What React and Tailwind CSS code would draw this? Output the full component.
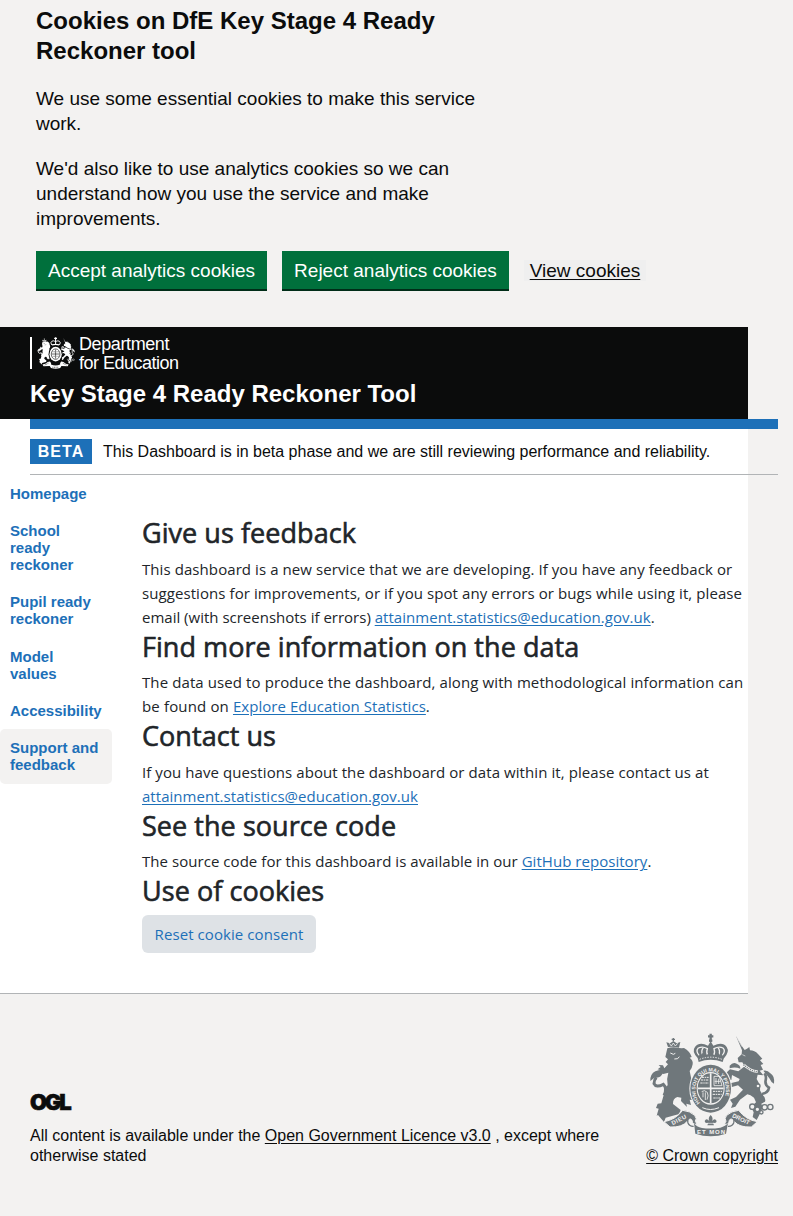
const Lion = () => (
  <g>
    <path d="M84 66 L79 52 L90 55 L100 48 L110 55 L121 51 L117 68 Q100 63 84 66Z" />
    <path d="M100 39v9M95 43h10" stroke="currentColor" strokeWidth="4" />
    <path d="M88 55l6 8 6-9 6 9 7-8" className="fill-none stroke-(--gap)" strokeWidth="2.5" />
    <path d="M82 70 Q99 64 117 69 Q126 70 132 69 Q150 79 155 96 L149 98 Q160 106 158 118 Q157 128 149 138 L156 172 Q152 181 158 192 L153 205 Q164 217 159 226 L149 224 L153 240 L139 236 L141 246 L123 228 L124 218 L112 216 Q98 221 99 237 Q112 247 122 255 Q120 263 115 268 L77 278 L72 291 L54 270 L50 272 L56 251 L48 249 L53 236 L64 235 L72 207 Q70 190 83 181 Q79 161 85 143 L70 147 L58 142 L63 136 L53 133 L62 126 L56 120 L69 121 L73 130 L84 118 L77 111 L84 103 L76 96 Z" />
    <path d="M91 84l9 4 6-3M103 102l10-1 5-6" className="fill-none stroke-(--gap)" strokeWidth="3" />
    <path d="M72 211 Q83 190 70 178 Q48 189 42 176 Q42 164 49 157" fill="none" stroke="currentColor" strokeWidth="9" />
    <path d="M31 168 Q30 147 46 139 Q61 131 79 136 Q69 143 65 150 Q59 160 43 158Z" />
  </g>
);

const Unicorn = () => (
  <g>
    <path d="M288 33 L307 65 L314 75 L321 71 L328 66 L330 76 Q344 76 354 87 L367 101 L360 106 L370 117 L362 120 L369 134 L359 137 L370 151 L353 149 L350 162 Q362 178 360 196 L366 208 Q379 219 375 230 L364 236 Q370 247 362 262 L350 285 L338 276 L341 262 L333 246 L348 232 L342 218 Q331 209 322 208 L300 224 L286 245 L273 249 L278 236 L270 224 L288 216 L309 194 L294 181 L273 187 L268 197 L257 188 L271 175 L296 169 L299 162 L276 150 L274 165 L264 164 L259 143 L270 133 L295 139 L314 124 L307 112 L296 112 L293 99 L305 88 L306 76Z" />
    <path d="M311 119 Q330 138 353 140" className="fill-none stroke-(--gap)" strokeWidth="8" />
    <path d="M311 119 Q330 138 353 140" fill="none" stroke="currentColor" strokeWidth="4" strokeDasharray="3 3" />
    <path d="M307 89l9 4M292 40l14 25" className="fill-none stroke-(--gap)" strokeWidth="2" />
    <path d="M365 207 Q385 204 387 188 Q374 180 377 166 Q380 152 373 145" fill="none" stroke="currentColor" strokeWidth="8" />
    <path d="M370 137 Q382 134 391 145 Q405 153 402 176 Q393 172 388 160 Q380 149 370 137Z" />
    <path d="M269 122 Q279 110 290 116 Q302 121 301 131 Q285 124 269 130Z" />
    <g className="fill-(--gap)" stroke="currentColor" strokeWidth="4">
      <circle cx="354" cy="183" r="6" /><circle cx="337" cy="245" r="8" /><circle cx="352" cy="253" r="7" />
      <circle cx="374" cy="247" r="8" /><circle cx="391" cy="246" r="8" /><circle cx="364" cy="262" r="5" />
    </g>
  </g>
);

const Crown = () => (
  <g>
    <path d="M173 99 Q154 79 165 66 Q178 49 204 62 L212 49 L220 62 Q248 49 260 66 Q270 81 251 101 L248 111 Q212 98 176 111Z" />
    <path d="M177 91 Q166 77 175 69 Q188 63 202 71 Q198 82 203 90M247 91 Q258 77 249 69 Q237 63 222 71 Q226 82 221 90M190 68 Q182 77 188 92M234 68 Q242 77 236 92" className="fill-none stroke-(--gap)" strokeWidth="4" />
    <path d="M212 26v25M204 34h16M207 47h10" stroke="currentColor" strokeWidth="7" />
    <path d="M171 88l8 8 8-12 10 9 14-13 14 13 10-9 9 12 8-8-6 18q-35-10-68 0z" />
    <path d="M179 103 Q212 90 246 103" className="fill-none stroke-(--gap)" strokeWidth="3" strokeDasharray="4 4" />
  </g>
);

const Shield = () => (
  <g>
    <ellipse cx="212" cy="191" rx="64" ry="76" className="fill-(--gap)" />
    <ellipse cx="212" cy="191" rx="61" ry="72" />
    <ellipse cx="212" cy="190" rx="42" ry="49" className="fill-(--gap)" />
    <ellipse cx="212" cy="190" rx="39" ry="45" />
    <path d="M212 145v90M173 190h78" className="stroke-(--gap)" strokeWidth="5" />
    <path d="M183 165h23M181 174h25M186 157h20M218 208h27M220 219h20M219 199h27" className="stroke-(--gap)" strokeWidth="3" strokeDasharray="7 2 4 2" />
    <path d="M222 154h16l8 28h-24zM228 159v18M236 161v16M224 169h18M185 200q8-7 17 2 5 10-1 22M189 202v15M196 202v23" className="fill-none stroke-(--gap)" strokeWidth="2.5" />
    <path id="garter" d="M180 234 A46 55 0 1 1 244 234" fill="none" />
    <text className="fill-(--gap) font-['Liberation_Sans'] text-[15.5px] font-bold">
      <textPath href="#garter">HONI SOIT QUI MAL Y PENSE</textPath>
    </text>
    <path d="M187 248q24 11 50 0" className="fill-none stroke-(--gap)" strokeWidth="3" />
  </g>
);

const Ribbon = () => (
  <g>
    <path d="M72 290 Q106 285 128 256 Q150 258 164 271 Q172 281 166 289 L171 297 Q158 301 156 286 Q150 276 142 289 Q126 308 90 306Z" className="stroke-(--gap)" strokeWidth="3" />
    <path d="M352 290 Q318 285 296 256 Q274 258 260 271 Q252 281 258 289 L253 297 Q266 301 268 286 Q274 276 282 289 Q298 308 334 306Z" className="stroke-(--gap)" strokeWidth="3" />
    <path d="M162 294 Q169 306 186 309 Q212 313 241 308 Q257 304 264 294 L258 326 Q212 341 166 326Z" />
    <path d="M152 276q-12 4-8 18q5 11 17 10M273 276q12 4 8 18q-5 11-17 10" fill="none" stroke="currentColor" strokeWidth="4" />
    <path d="M212 270q-9 9-4 18-9-10-14 0 1 9 11 5l-3 8h20l-3-8q10 4 11-5-5-10-14 0 5-9-4-18Z" />
    <path d="M200 295h24" className="fill-none stroke-(--gap)" strokeWidth="2" />
    <g className="fill-(--gap) font-['Liberation_Sans'] text-[18px] font-bold">
      <text transform="translate(98 301) rotate(-27)" textLength="48">DIEU</text>
      <text x="171" y="328" textLength="84">ET MON</text>
      <text transform="translate(275 276) rotate(25)" textLength="56">DROIT</text>
    </g>
  </g>
);

const Crest = ({ className }) => (
  <svg viewBox="27 24 378 312" preserveAspectRatio="none" fill="currentColor" className={className} aria-hidden="true">
    <Lion />
    <Unicorn />
    <Shield />
    <Crown />
    <Ribbon />
  </svg>
);

const SmallCrest = ({ className }) => (
  <svg viewBox="27 24 378 312" preserveAspectRatio="none" className={className} fill="currentColor" aria-hidden="true">
    <Lion />
    <Unicorn />
    <ellipse cx="212" cy="191" rx="70" ry="80" className="fill-(--gap)" />
    <ellipse cx="212" cy="191" rx="61" ry="72" />
    <ellipse cx="212" cy="191" rx="43" ry="51" className="fill-none stroke-(--gap)" strokeWidth="6" />
    <path d="M212 145v90M173 190h78" className="stroke-(--gap)" strokeWidth="6" />
    <path d="M182 168h22M222 168h20M184 212h20M222 212h20" className="stroke-(--gap)" strokeWidth="6" strokeDasharray="8 5" />
    <path d="M174 102 Q156 76 174 66 Q190 56 204 66 Q212 60 220 66 Q234 56 250 66 Q268 76 250 102" fill="none" stroke="currentColor" strokeWidth="9" />
    <path d="M212 26v76M198 38h28M176 101q36-10 72 0" fill="none" stroke="currentColor" strokeWidth="11" />
    <path d="M81 293 Q112 288 134 268 L156 262 Q172 282 166 292 Q212 311 258 292 Q252 278 268 262 L290 268 Q311 288 342 293 L332 308 L270 306 L258 327 Q212 341 166 327 L154 306 L92 308Z" />
    <path d="M104 297l36-17M284 280l36 17M180 319h64" className="stroke-(--gap)" strokeWidth="6" strokeDasharray="10 6" />
  </svg>
);

const navItems = ["Homepage", "School ready reckoner", "Pupil ready reckoner", "Model values", "Accessibility", "Support and feedback"];

const Heading = ({ children }) => (
  <h2 className="mb-2 h-[33.6px] pt-px text-[27px] leading-[33.6px] font-medium tracking-[0.05px] whitespace-nowrap [-webkit-text-stroke:0.6px_#212529]">{children}</h2>
);
const Lines = ({ children }) => <div className="whitespace-nowrap">{children}</div>;
const Link = ({ children }) => (
  <a href="#" className="tracking-[0.04px] text-[#1d70b8] underline underline-offset-2">{children}</a>
);

function CookieBanner() {
  return (
    <section className="h-[327px] px-9 pt-1.5">
      <h2 className="w-[450px] text-[24px] leading-[30px] font-bold">Cookies on DfE Key Stage 4 Ready Reckoner tool</h2>
      <div className="mt-5 flex w-[450px] flex-col gap-5 text-[19px] leading-[25px]">
        <p>We use some essential cookies to make this service work.</p>
        <p>We'd also like to use analytics cookies so we can understand how you use the service and make improvements.</p>
      </div>
      <div className="mt-5 flex gap-[15px] text-[19px] leading-[19px] whitespace-nowrap">
        <button className="h-10 w-[231px] border-b-2 border-[#002d18] bg-[#00703c] text-white">Accept analytics cookies</button>
        <button className="h-10 w-[227px] border-b-2 border-[#002d18] bg-[#00703c] text-white">Reject analytics cookies</button>
        <button className="mt-[9px] h-[21px] w-[122px] bg-[#efefef] underline underline-offset-2">View cookies</button>
      </div>
    </section>
  );
}

export default function App() {
  return (
    <div className="h-[1216px] w-[793px] overflow-hidden bg-[#f3f2f1] font-['Liberation_Sans',Arial,sans-serif] text-[#0b0c0c]">
      <CookieBanner />
      <div className="h-[667px] w-[748px] border-b border-[#b1b4b6] bg-white">
        <header className="h-[92px] bg-[#0b0c0c] pt-2.5 pl-[30px] text-white">
          <div className="flex h-8">
            <div className="w-0.5 bg-white" />
            <SmallCrest className="ml-[5px] h-8 w-[38px] text-white [--gap:#0b0c0c]" />
            <div className="-mt-[2px] ml-1 text-[18px] leading-[18.500px] whitespace-nowrap">
              <div className="tracking-[-0.4px]">Department</div>
              <div className="tracking-[-0.5px]">for Education</div>
            </div>
          </div>
          <h1 className="mt-[10px] text-[24px] leading-[30px] font-bold whitespace-nowrap">Key Stage 4 Ready Reckoner Tool</h1>
        </header>
        <div className="ml-[30px] h-14 w-[748px] border-t-[10px] border-b border-t-[#1d70b8] border-b-[#b1b4b6] pt-2.5">
          <div className="flex items-center whitespace-nowrap">
            <strong className="h-[25px] w-[62px] bg-[#1d70b8] text-center text-[16px] leading-[25px] tracking-[1px] text-white">BETA</strong>
            <span className="ml-[11px] text-[16px] leading-5 tracking-[-0.01px]">This Dashboard is in beta phase and we are still reviewing performance and reliability.</span>
          </div>
        </div>
        <div className="flex">
          <nav className="w-28 text-[15px] leading-[17.1px] font-bold text-[#1d70b8]">
            {navItems.map((item, i) => (
              <a key={item} href="#" className={i === 5 ? "block rounded-[5px] bg-[#f3f2f1] px-2.5 pt-2.5 pb-[11px]" : "block p-2.5"}>{item}</a>
            ))}
          </nav>
          <main className="mt-10 ml-[30px] w-[606px] font-['Open_Sans','Noto_Sans',sans-serif] text-[15px] leading-6 tracking-[0.08px] text-[#212529]">
            <Heading>Give us feedback</Heading>
            <Lines>
              <p>This dashboard is a new service that we are developing. If you have any feedback or</p>
              <p>suggestions for improvements, or if you spot any errors or bugs while using it, please</p>
              <p className="tracking-[0px]">email (with screenshots if errors) <Link>attainment.statistics@education.gov.uk</Link>.</p>
            </Lines>
            <Heading>Find more information on the data</Heading>
            <Lines>
              <p className="tracking-[0.1px]">The data used to produce the dashboard, along with methodological information can</p>
              <p className="tracking-[0.15px]">be found on <Link>Explore Education Statistics</Link>.</p>
            </Lines>
            <Heading>Contact us</Heading>
            <Lines>
              <p>If you have questions about the dashboard or data within it, please contact us at</p>
              <p><Link>attainment.statistics@education.gov.uk</Link></p>
            </Lines>
            <Heading>See the source code</Heading>
            <p className="tracking-[0.05px] whitespace-nowrap">The source code for this dashboard is available in our <Link>GitHub repository</Link>.</p>
            <Heading>Use of cookies</Heading>
            <button className="h-[38px] w-[174px] rounded-md bg-[#dee2e6] text-[#1d70b8]">Reset cookie consent</button>
          </main>
        </div>
      </div>
      <footer className="flex justify-between pt-[39px] pr-[15px] pl-[30px] text-[16px] leading-5">
        <div className="w-[580px] pt-[60px]">
          <div className="-mt-px h-[34px] font-['Inter'] text-[22px] leading-[20px] font-black tracking-[-2.2px] [-webkit-text-stroke:0.6px_#0b0c0c]">OGL</div>
          <p>All content is available under the <a href="#" className="underline underline-offset-2">Open Government Licence v3.0</a> , except where</p>
          <p>otherwise stated</p>
        </div>
        <div className="flex flex-col items-end">
          <Crest className="mr-[3px] h-[104px] w-[126px] text-[#6f777b] [--gap:#f3f2f1]" />
          <a href="#" className="mt-[9px] whitespace-nowrap underline underline-offset-2">© Crown copyright</a>
        </div>
      </footer>
    </div>
  );
}
